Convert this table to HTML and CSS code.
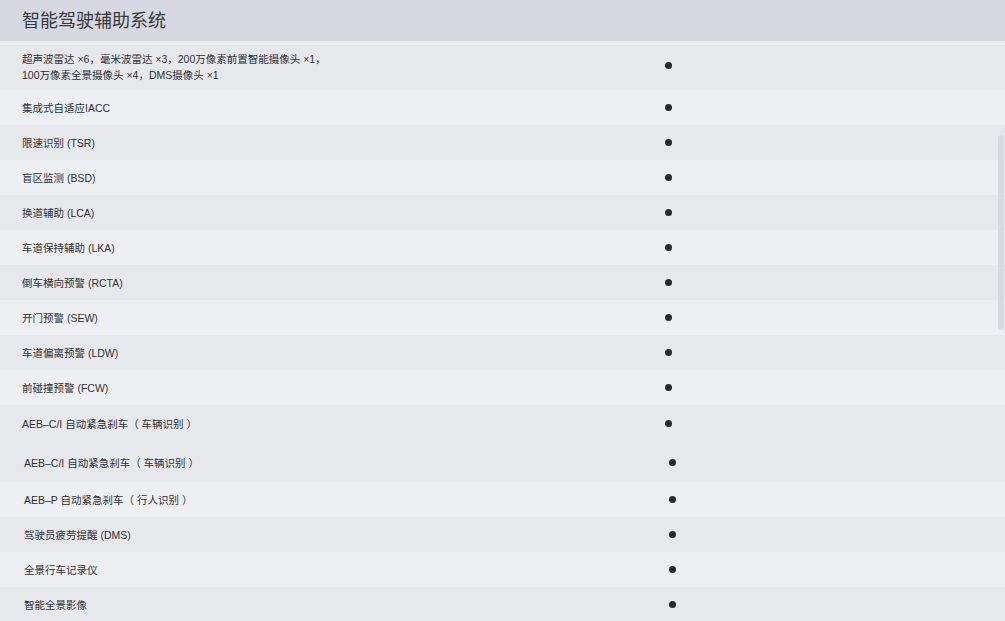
FILE: index.html
```html
<!DOCTYPE html>
<html lang="zh">
<head>
<meta charset="utf-8">
<title>智能驾驶辅助系统</title>
<link rel="stylesheet" href="styles.css">
</head>
<body>
<div class="page">
  <header class="title">智能驾驶辅助系统</header>
  <div class="sep"></div>
  <section class="table">
    <div class="row tall dark"><div class="label">超声波雷达 ×6，毫米波雷达 ×3，200万像素前置智能摄像头 ×1，<br>100万像素全景摄像头 ×4，DMS摄像头 ×1</div><span class="dot"></span></div>
    <div class="row light"><div class="label">集成式自适应IACC</div><span class="dot"></span></div>
    <div class="row dark"><div class="label">限速识别 (TSR)</div><span class="dot"></span></div>
    <div class="row light"><div class="label">盲区监测 (BSD)</div><span class="dot"></span></div>
    <div class="row dark"><div class="label">换道辅助 (LCA)</div><span class="dot"></span></div>
    <div class="row light"><div class="label">车道保持辅助 (LKA)</div><span class="dot"></span></div>
    <div class="row dark"><div class="label">倒车横向预警 (RCTA)</div><span class="dot"></span></div>
    <div class="row light"><div class="label">开门预警 (SEW)</div><span class="dot"></span></div>
    <div class="row dark"><div class="label">车道偏离预警 (LDW)</div><span class="dot"></span></div>
    <div class="row light"><div class="label">前碰撞预警 (FCW)</div><span class="dot"></span></div>
    <div class="row dark last"><div class="label">AEB–C/I 自动紧急刹车（ 车辆识别 ）</div><span class="dot"></span></div>
  </section>
  <section class="table second">
    <div class="row dark first"><div class="label">AEB–C/I 自动紧急刹车（ 车辆识别 ）</div><span class="dot"></span></div>
    <div class="row light"><div class="label">AEB–P 自动紧急刹车（ 行人识别 ）</div><span class="dot"></span></div>
    <div class="row dark"><div class="label">驾驶员疲劳提醒 (DMS)</div><span class="dot"></span></div>
    <div class="row light"><div class="label">全景行车记录仪</div><span class="dot"></span></div>
    <div class="row dark"><div class="label">智能全景影像</div><span class="dot"></span></div>
  </section>
  <div class="thumb"></div>
</div>
</body>
</html>
```

FILE: styles.css
```css
html, body {
  margin: 0;
  padding: 0;
}
body {
  background: #e9eaee;
  font-family: "Liberation Sans", "Noto Sans CJK SC", sans-serif;
  color: #2f3035;
  overflow: hidden;
}
.page {
  position: relative;
  width: 1005px;
  height: 621px;
  overflow: hidden;
}
.title {
  height: 41px;
  box-sizing: border-box;
  padding-left: 22px;
  padding-bottom: 4px;
  display: flex;
  align-items: center;
  background: #d6d7e0;
  font-size: 18px;
  color: #36373c;
}
.sep {
  height: 5px;
  background: #eef0f4;
  border-top: 1px solid #e4e6ec;
  border-bottom: 1px solid #e1e3e8;
  box-sizing: border-box;
}
.table {
  display: flex;
  flex-direction: column;
}
.row {
  display: grid;
  grid-template-columns: 665px 7px;
  align-items: center;
  height: 35px;
  font-size: 10.5px;
}
.row.tall {
  height: 44px;
  line-height: 16px;
  padding-bottom: 3px;
  box-sizing: border-box;
}
.row.tall .dot {
  margin-bottom: 2px;
}
.row.last {
  height: 36px;
}
.row.first {
  height: 41px;
  padding-top: 2px;
  box-sizing: border-box;
}
.dark {
  background: #e7e8ec;
}
.light {
  background: #eeeff3;
}
.label {
  padding-left: 22px;
  white-space: nowrap;
}
.second .row {
  grid-template-columns: 669px 7px;
}
.second .label {
  padding-left: 24px;
}
.dot {
  width: 7px;
  height: 7px;
  border-radius: 50%;
  background: #28292d;
}
.thumb {
  position: absolute;
  right: 1px;
  top: 135px;
  width: 6px;
  height: 195px;
  border-radius: 3px;
  background: #d8d9de;
}
```
